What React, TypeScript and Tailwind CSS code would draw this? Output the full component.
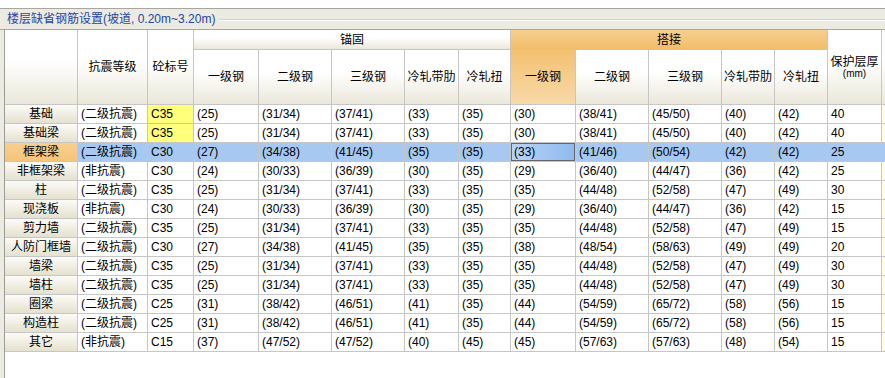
const FONT = "font-['Liberation_Sans','Noto_Sans_CJK_SC',sans-serif]";

type Row = {
  name: string;
  grade: string;
  concrete: string;
  vals: string[];
  cover: string;
  extra: string;
};

const rows: Row[] = [
  { name: "基础", grade: "(二级抗震)", concrete: "C35", vals: ["(25)", "(31/34)", "(37/41)", "(33)", "(35)", "(30)", "(38/41)", "(45/50)", "(40)", "(42)"], cover: "40", extra: "1" },
  { name: "基础梁", grade: "(二级抗震)", concrete: "C35", vals: ["(25)", "(31/34)", "(37/41)", "(33)", "(35)", "(30)", "(38/41)", "(45/50)", "(40)", "(42)"], cover: "40", extra: "1" },
  { name: "框架梁", grade: "(二级抗震)", concrete: "C30", vals: ["(27)", "(34/38)", "(41/45)", "(35)", "(35)", "(33)", "(41/46)", "(50/54)", "(42)", "(42)"], cover: "25", extra: "1" },
  { name: "非框架梁", grade: "(非抗震)", concrete: "C30", vals: ["(24)", "(30/33)", "(36/39)", "(30)", "(35)", "(29)", "(36/40)", "(44/47)", "(36)", "(42)"], cover: "25", extra: "1" },
  { name: "柱", grade: "(二级抗震)", concrete: "C35", vals: ["(25)", "(31/34)", "(37/41)", "(33)", "(35)", "(35)", "(44/48)", "(52/58)", "(47)", "(49)"], cover: "30", extra: "1" },
  { name: "现浇板", grade: "(非抗震)", concrete: "C30", vals: ["(24)", "(30/33)", "(36/39)", "(30)", "(35)", "(29)", "(36/40)", "(44/47)", "(36)", "(42)"], cover: "15", extra: "I" },
  { name: "剪力墙", grade: "(二级抗震)", concrete: "C35", vals: ["(25)", "(31/34)", "(37/41)", "(33)", "(35)", "(35)", "(44/48)", "(52/58)", "(47)", "(49)"], cover: "15", extra: "1" },
  { name: "人防门框墙", grade: "(二级抗震)", concrete: "C30", vals: ["(27)", "(34/38)", "(41/45)", "(35)", "(35)", "(38)", "(48/54)", "(58/63)", "(49)", "(49)"], cover: "20", extra: "1" },
  { name: "墙梁", grade: "(二级抗震)", concrete: "C35", vals: ["(25)", "(31/34)", "(37/41)", "(33)", "(35)", "(35)", "(44/48)", "(52/58)", "(47)", "(49)"], cover: "30", extra: "1" },
  { name: "墙柱", grade: "(二级抗震)", concrete: "C35", vals: ["(25)", "(31/34)", "(37/41)", "(33)", "(35)", "(35)", "(44/48)", "(52/58)", "(47)", "(49)"], cover: "30", extra: "1" },
  { name: "圈梁", grade: "(二级抗震)", concrete: "C25", vals: ["(31)", "(38/42)", "(46/51)", "(41)", "(35)", "(44)", "(54/59)", "(65/72)", "(58)", "(56)"], cover: "15", extra: "1" },
  { name: "构造柱", grade: "(二级抗震)", concrete: "C25", vals: ["(31)", "(38/42)", "(46/51)", "(41)", "(35)", "(44)", "(54/59)", "(65/72)", "(58)", "(56)"], cover: "15", extra: "7" },
  { name: "其它", grade: "(非抗震)", concrete: "C15", vals: ["(37)", "(47/52)", "(47/52)", "(40)", "(45)", "(45)", "(57/63)", "(57/63)", "(48)", "(54)"], cover: "15", extra: "1" },
];

const subHeads = ["一级钢", "二级钢", "三级钢", "冷轧带肋", "冷轧扭"];

const head = "bg-linear-to-b from-white from-40% to-[#ebe8da] flex items-center justify-center";
const orange = "bg-linear-to-b from-[#f6cf8e] to-[#f2bd6a] flex items-center justify-center";
const cell = "flex items-center pl-[3px] whitespace-nowrap overflow-hidden";

export default function App() {
  const selRow = 2;
  const selCol = 5;

  return (
    <div className={`w-[885px] h-[378px] overflow-hidden bg-white flex flex-col text-[12px] text-black ${FONT}`}>
      <div className="h-2 shrink-0 bg-white" />
      {/* title bar */}
      <div className="h-[22px] shrink-0 border-y border-[#a7a6a0] bg-[#ecebe2] flex items-center">
        <span className="pl-[7px] pr-1 text-[#1c45a8] leading-none whitespace-nowrap">
          楼层缺省钢筋设置(坡道, 0.20m~3.20m)
        </span>
        <div className="flex-1 flex flex-col mt-px">
          <div className="h-px bg-[#d5d2c4]" />
          <div className="h-px bg-white" />
        </div>
      </div>

      <div className="flex-1 flex min-h-0">
        <div className="w-1 shrink-0 bg-[#ecebe2]" />
        <div className="flex-1 border-l border-[#9c9b95] bg-white overflow-hidden">
          <div className="inline-grid grid-cols-[72px_69px_45px_64px_72px_72px_53px_51px_64px_72px_72px_52px_52px_53px_60px] grid-rows-[19px_54px_repeat(13,18px)] gap-px bg-[#c6c6c6] border-b border-[#c6c6c6]">
            <div className={`${head} row-span-2`} />
            <div className={`${head} row-span-2`}>抗震等级</div>
            <div className={`${head} row-span-2`}>砼标号</div>
            <div className={`${head} col-span-5`}>锚固</div>
            <div className={`${orange} col-span-5`}>搭接</div>
            <div className={`${head} row-span-2 flex-col leading-[12px]`}>
              <span>保护层厚</span>
              <span className="text-[10px] leading-[11px]">(mm)</span>
            </div>
            <div className={`${head} row-span-2`} />

            {subHeads.map((h) => (
              <div key={"a" + h} className={head}>{h}</div>
            ))}
            {subHeads.map((h, i) => (
              <div
                key={"b" + h}
                className={
                  i === 0
                    ? "bg-linear-to-b from-[#f3c170] to-[#f8d9a8] flex items-center justify-center"
                    : head
                }
              >
                {h}
              </div>
            ))}

            {rows.map((r, ri) => {
              const sel = ri === selRow;
              const bg = sel ? "bg-[#a7c9f1]" : "bg-white";
              return [
                <div
                  key={r.name + "h"}
                  className={`flex items-center justify-center ${
                    sel
                      ? "bg-linear-to-b from-[#f8cf8e] to-[#f6c47a]"
                      : "bg-linear-to-b from-[#fcfbf7] to-[#e5e1cf]"
                  }`}
                >
                  {r.name}
                </div>,
                <div key={r.name + "g"} className={`${cell} ${bg}`}>{r.grade}</div>,
                <div key={r.name + "c"} className={`${cell} ${ri < 2 ? "bg-[#ffff7c]" : bg}`}>{r.concrete}</div>,
                ...r.vals.map((v, vi) =>
                  sel && vi === selCol ? (
                    <div key={r.name + vi} className={`${cell} relative bg-linear-to-r from-[#b9d4f5] to-[#8fb9ed]`}>
                      {v}
                      <div className="absolute -inset-px border-2 border-[#666666] z-10" />
                      <div className="absolute right-[-3px] bottom-[-3px] w-1 h-1 bg-[#6b6b6b] z-20" />
                    </div>
                  ) : (
                    <div key={r.name + vi} className={`${cell} ${bg}`}>{v}</div>
                  )
                ),
                <div key={r.name + "v"} className={`${cell} ${bg}`}>{r.cover}</div>,
                <div key={r.name + "x"} className={`${cell} ${sel ? bg : "bg-[#fefee2]"}`}>{r.extra}</div>,
              ];
            })}
          </div>
        </div>
      </div>
    </div>
  );
}
